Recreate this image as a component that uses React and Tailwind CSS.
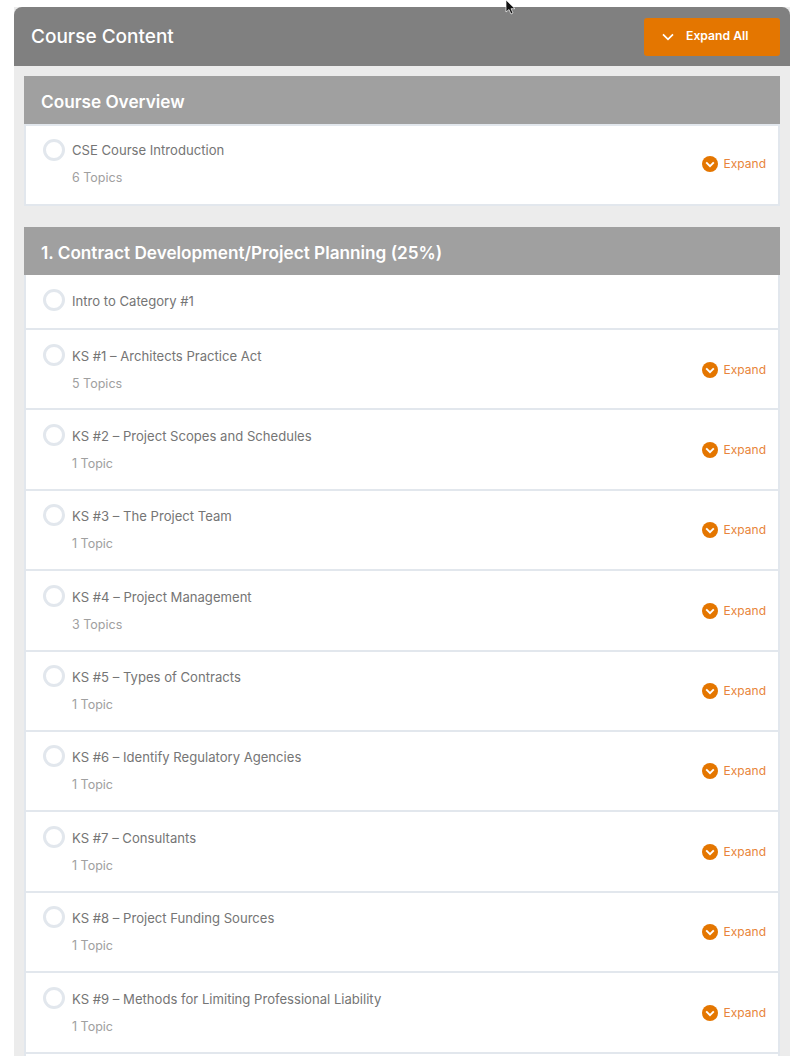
import React from 'react'

const lessons = [
  { title: 'KS #1 – Architects Practice Act', topics: '5 Topics' },
  { title: 'KS #2 – Project Scopes and Schedules', topics: '1 Topic' },
  { title: 'KS #3 – The Project Team', topics: '1 Topic' },
  { title: 'KS #4 – Project Management', topics: '3 Topics' },
  { title: 'KS #5 – Types of Contracts', topics: '1 Topic' },
  { title: 'KS #6 – Identify Regulatory Agencies', topics: '1 Topic' },
  { title: 'KS #7 – Consultants', topics: '1 Topic' },
  { title: 'KS #8 – Project Funding Sources', topics: '1 Topic' },
  { title: 'KS #9 – Methods for Limiting Professional Liability', topics: '1 Topic' },
]

const Circle = () => (
  <span className="block w-[22px] h-[22px] shrink-0 rounded-full border-[3px] border-[#e2e7ed] bg-white" />
)

const ExpandButton = () => (
  <div className="flex items-center gap-[6px] text-[12px] leading-none text-[#e8843a]">
    <svg width="16" height="16" viewBox="0 0 16 16">
      <circle cx="8" cy="8" r="8" fill="#e47600" />
      <path d="M4.2 6.4 8 10.2l3.8-3.8" fill="none" stroke="#fff" strokeWidth="1.9" />
    </svg>
    <span>Expand</span>
  </div>
)

const Row = ({ title, topics }) => (
  <div className="flex h-[80.4px] items-start justify-between pl-[17px] pr-[12px] border-b-2 border-[#e2e7ed]">
    <div className="flex gap-[7px] pt-[13.5px]">
      <Circle />
      <div>
        <div className="pt-[2px] text-[13.1px] leading-[20px] text-[#757575]">{title}</div>
        <div className="mt-[9px] text-[12.5px] leading-[18px] text-[#a0a0a0]">{topics}</div>
      </div>
    </div>
    <div className="pt-[31.5px]">
      <ExpandButton />
    </div>
  </div>
)

const SectionHeader = ({ children }) => (
  <div className="flex h-[48px] items-center bg-[#a0a0a0] pl-[17px] pt-[3px] text-[17.2px] font-semibold text-white">
    {children}
  </div>
)

export default function App() {
  return (
    <div className="relative h-[1056px] overflow-hidden bg-white pt-[7px] pl-[14px] font-['Inter',sans-serif]">
      {/* mouse pointer caught in the screenshot */}
      <svg className="absolute left-[505px] top-0" width="11" height="16" viewBox="0 0 11 16">
        <path d="M1 0v12l3-2.5 2 4.5 2-1-2-4.3h4z" fill="#111" stroke="#fff" strokeWidth="0.7" />
      </svg>

      <div className="w-[776px] bg-[#ececec]">
        <div className="flex h-[59px] items-center justify-between rounded-t-[8px] bg-[#808080] pl-[17px] pr-[10px]">
          <h2 className="pt-[2px] text-[19px] font-medium text-white">Course Content</h2>
          <button className="flex h-[38px] w-[136px] items-center rounded-[3px] bg-[#e47600] pl-[18px] text-[12.2px] font-semibold text-white">
            <svg className="mr-[12px]" width="12" height="8" viewBox="0 0 12 8">
              <path d="M1 1.3 6 6.3l5-5" fill="none" stroke="#fff" strokeWidth="1.7" />
            </svg>
            Expand All
          </button>
        </div>

        <div className="px-[10px] pt-[10px]">
          <SectionHeader>Course Overview</SectionHeader>
          <div className="flex h-[82px] items-start justify-between border-2 border-[#e2e7ed] bg-white pl-[17px] pr-[12px]">
            <div className="flex gap-[7px] pt-[13px]">
              <Circle />
              <div>
                <div className="pt-[1px] text-[13.1px] leading-[20px] text-[#757575]">CSE Course Introduction</div>
                <div className="mt-[9px] text-[12.5px] leading-[18px] text-[#a0a0a0]">6 Topics</div>
              </div>
            </div>
            <div className="pt-[30px]">
              <ExpandButton />
            </div>
          </div>

          <div className="mt-[21px]">
            <SectionHeader>1. Contract Development/Project Planning (25%)</SectionHeader>
          </div>
          <div className="border-x-2 border-[#e2e7ed] bg-white">
            <div className="flex h-[55px] items-start gap-[7px] border-b-2 border-[#e2e7ed] pl-[17px] pt-[14px]">
              <Circle />
              <div className="text-[13.1px] leading-[24px] text-[#757575]">Intro to Category #1</div>
            </div>
            {lessons.map((l) => (
              <Row key={l.title} title={l.title} topics={l.topics} />
            ))}
            <div className="h-[20px]" />
          </div>
        </div>
      </div>
    </div>
  )
}
